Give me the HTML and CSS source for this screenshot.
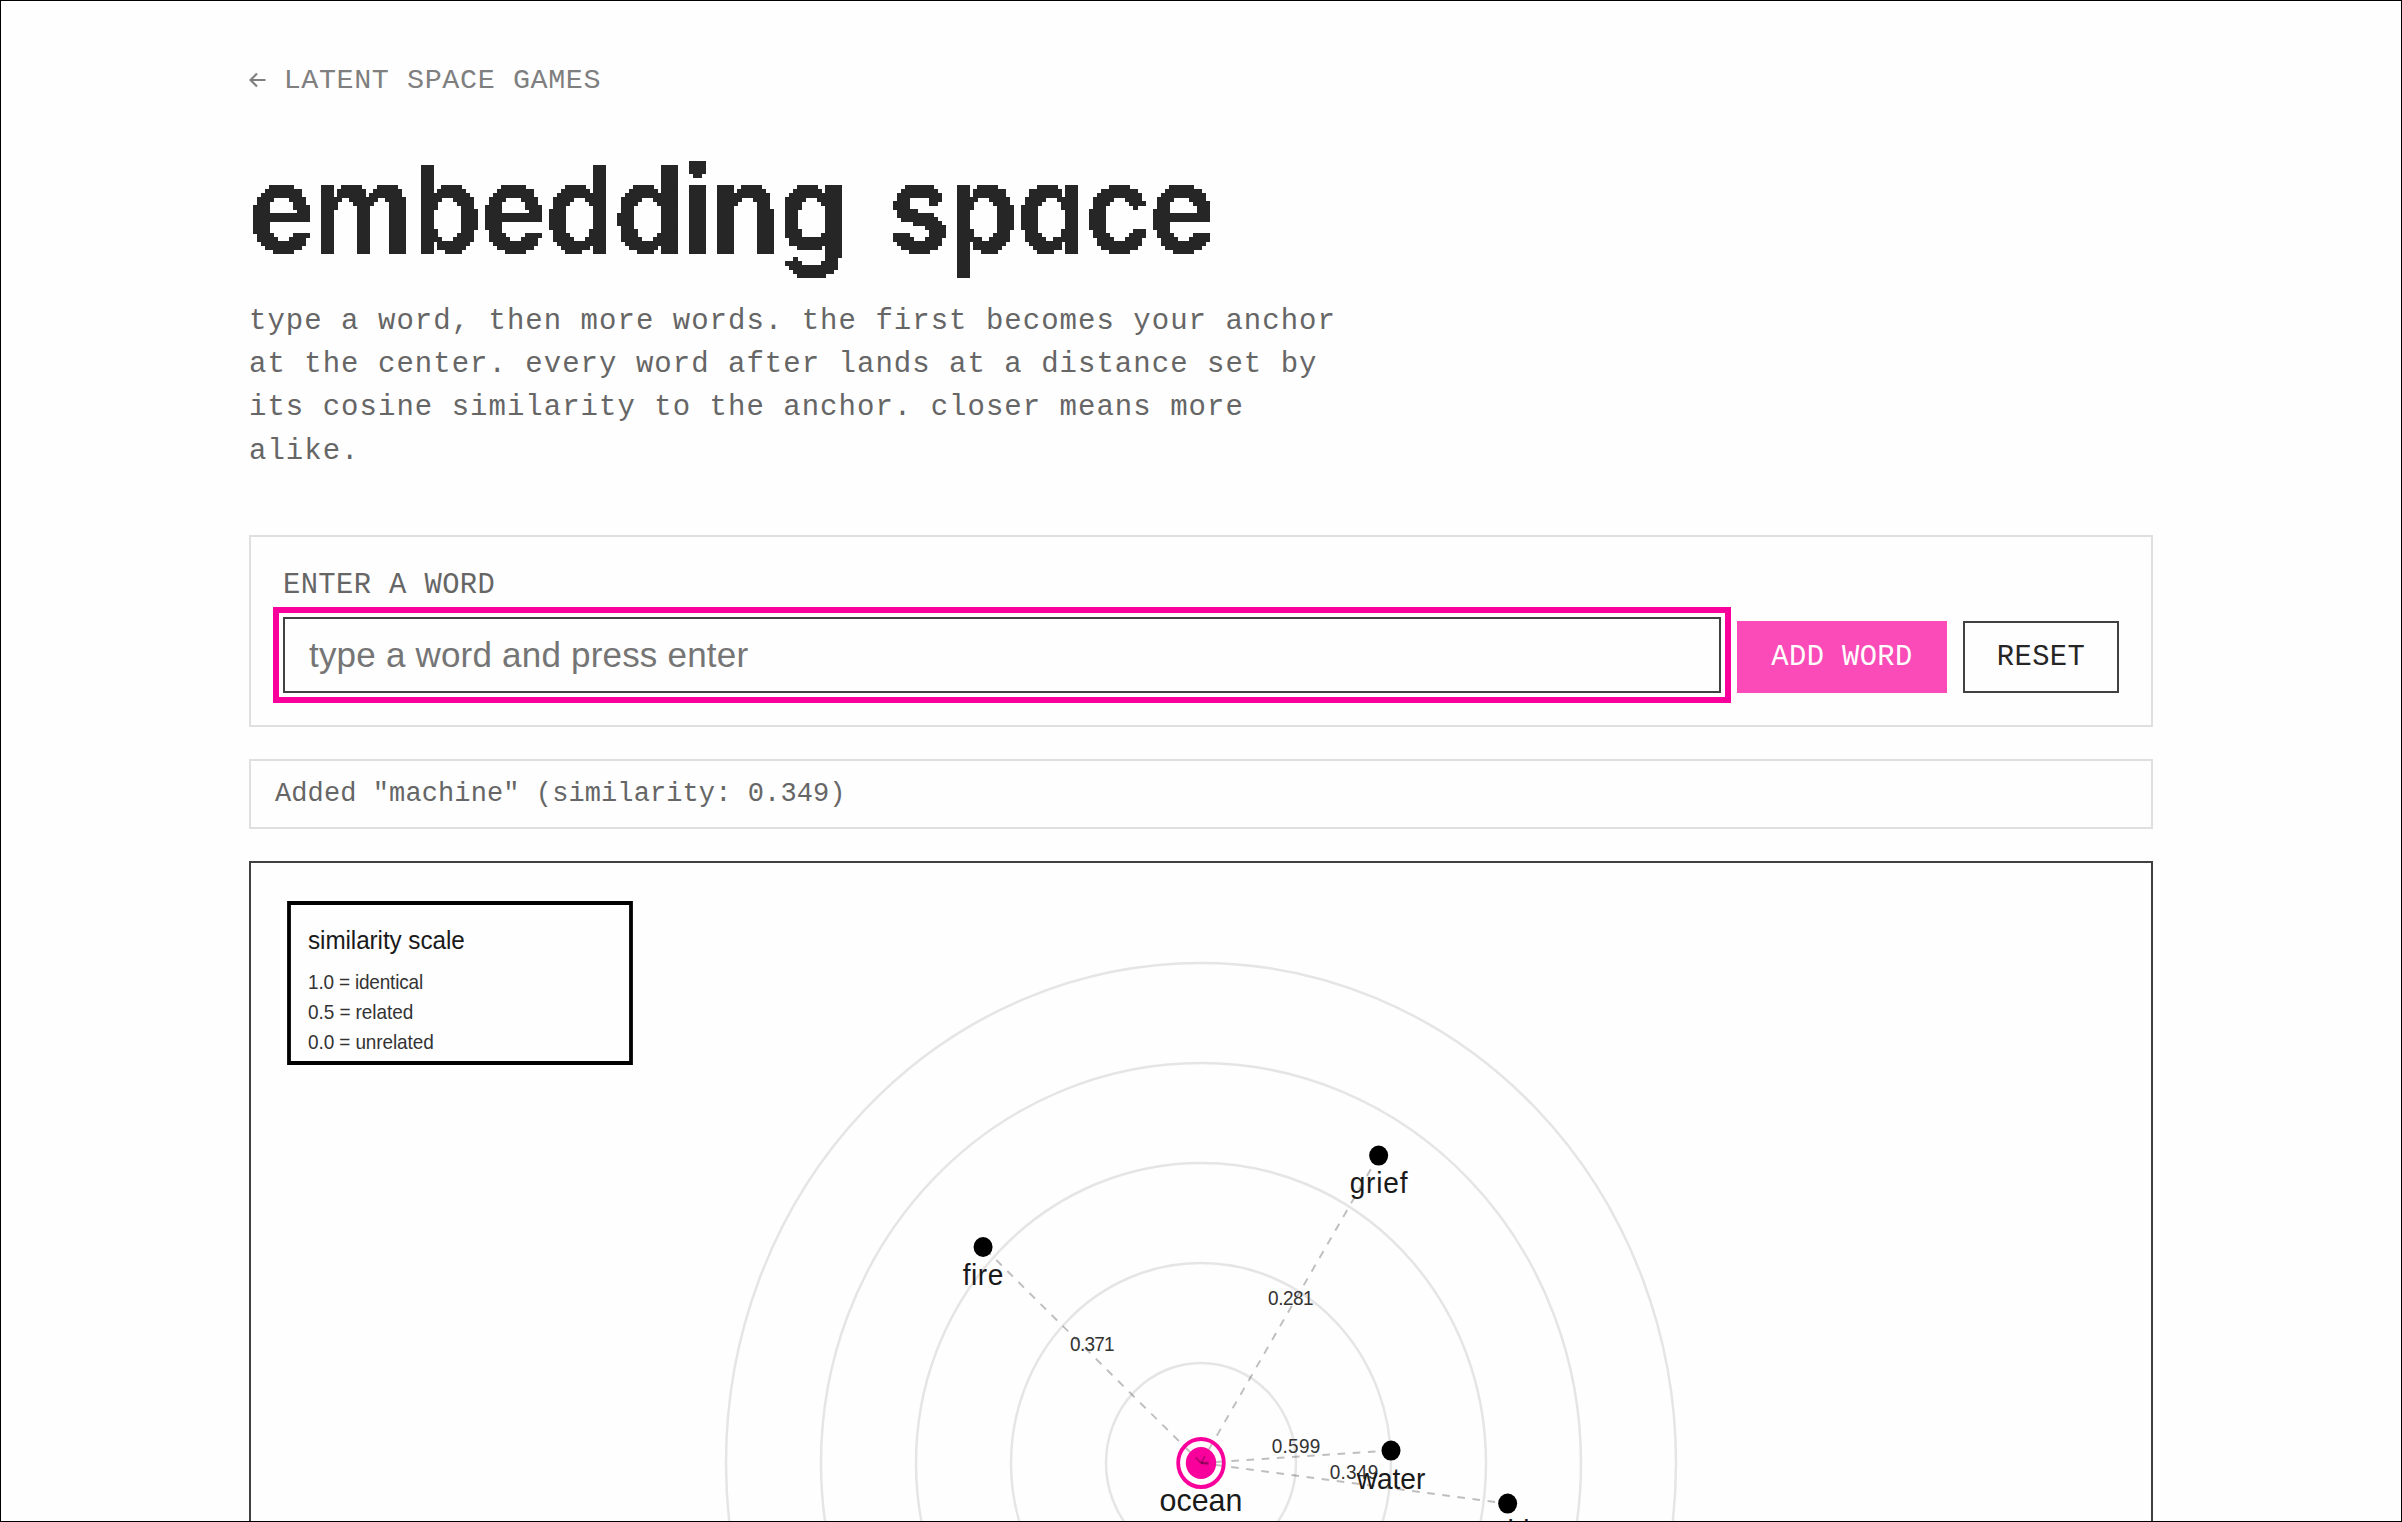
FILE: index.html
```html
<!DOCTYPE html>
<html lang="en">
<head>
    <meta charset="UTF-8">
    <meta name="viewport" content="width=device-width, initial-scale=1.0">
    <title>embedding space</title>
    <link rel="stylesheet" href="styles.css">
</head>
<body>
    <!-- snaps the heading to a 4px grid of blocks -->
    <svg class="defs" width="0" height="0" aria-hidden="true">
        <filter id="pixelate" filterUnits="userSpaceOnUse" primitiveUnits="userSpaceOnUse" x="0" y="0" width="1200" height="160" color-interpolation-filters="sRGB">
            <feFlood x="2" y="2" width="1" height="1" flood-color="#000" result="point"/>
            <feOffset in="point" x="0" y="0" width="4" height="4" result="cell"/>
            <feTile in="cell" x="0" y="0" width="1200" height="160" result="grid"/>
            <feComposite in="SourceGraphic" in2="grid" operator="in" result="samples"/>
            <feComponentTransfer in="samples" result="hard">
                <feFuncA type="discrete" tableValues="0 1"/>
            </feComponentTransfer>
            <feMorphology in="hard" operator="dilate" radius="2"/>
        </filter>
    </svg>

    <div class="page">
        <main class="container">
            <a class="back-link" href="#"><svg class="arrow" viewBox="0 0 17 16"><path d="M16.5 8H1.5M8 1.5L1.5 8L8 14.5"/></svg> LATENT SPACE GAMES</a>
            <h1 class="title"><span>embedding space</span></h1>
            <p class="intro">type a word, then more words. the first becomes your anchor at the center. every word after lands at a distance set by its cosine similarity to the anchor. closer means more alike.</p>

            <form class="word-form">
                <div class="field">
                    <label for="word">ENTER A WORD</label>
                    <input type="text" id="word" placeholder="type a word and press enter" autocomplete="off">
                </div>
                <button type="button" class="btn btn-primary">ADD WORD</button>
                <button type="button" class="btn">RESET</button>
            </form>

            <div class="status">Added "machine" (similarity: 0.349)</div>

            <div class="plot">
                <svg viewBox="0 0 1000 600" preserveAspectRatio="none">
                    <g class="rings">
                        <circle cx="500" cy="300" r="50"/>
                        <circle cx="500" cy="300" r="100"/>
                        <circle cx="500" cy="300" r="150"/>
                        <circle cx="500" cy="300" r="200"/>
                        <circle cx="500" cy="300" r="250"/>
                    </g>

                    <circle class="anchor" cx="500" cy="300" r="8"/>
                    <g class="links">
                        <line x1="500" y1="300" x2="600" y2="293.8"/>
                        <line x1="500" y1="300" x2="385.3" y2="192"/>
                        <line x1="500" y1="300" x2="593.5" y2="146.3"/>
                        <line x1="500" y1="300" x2="661.4" y2="320.3"/>
                    </g>
                    <circle class="anchor-ring" cx="500" cy="300" r="12"/>

                    <g class="scores">
                        <text x="550" y="294.8" textLength="25.6">0.599</text>
                        <text x="442.8" y="243.8" textLength="23.4">0.371</text>
                        <text x="547.3" y="221" textLength="24">0.281</text>
                        <text x="580.5" y="308" textLength="25.6">0.349</text>
                    </g>

                    <g class="words">
                        <circle cx="600" cy="293.8" r="5"/>
                        <circle cx="385.3" cy="192" r="5"/>
                        <circle cx="593.5" cy="146.3" r="5"/>
                        <circle cx="661.4" cy="320.3" r="5"/>
                        <text class="anchor-word" x="500" y="324">ocean</text>
                        <text x="600" y="313">water</text>
                        <text x="385.3" y="211" textLength="21.4">fire</text>
                        <text x="593.5" y="164.8" textLength="30.5">grief</text>
                        <text x="661.4" y="339">machine</text>
                    </g>

                    <g class="legend">
                        <rect x="20" y="20" width="180" height="80"/>
                        <text class="legend-title" x="30" y="43" textLength="82.5">similarity scale</text>
                        <text x="30" y="63" textLength="60.6">1.0 = identical</text>
                        <text x="30" y="78" textLength="55.4">0.5 = related</text>
                        <text x="30" y="93" textLength="66.2">0.0 = unrelated</text>
                    </g>
                </svg>
            </div>
        </main>
    </div>
</body>
</html>
```
FILE: styles.css
```css
* {
    box-sizing: border-box;
}
body {
    margin: 0;
    background-color: #fefefe;
    color: #262626;
    font-family: "Liberation Mono", monospace;
    overflow: hidden;
}
.defs {
    position: absolute;
}
.page {
    height: 100vh;
    border: 1px solid #000;
    overflow: hidden;
}
.container {
    width: 1904px;
    margin: 0 auto;
    padding-top: 60px;
}
.back-link {
    display: block;
    height: 40px;
    font-size: 28.4px;
    line-height: 40px;
    letter-spacing: 0.6px;
    color: #7f7f7f;
    text-decoration: none;
}
.arrow {
    width: 17px;
    height: 16px;
    fill: none;
    stroke: #7f7f7f;
    stroke-width: 2.2;
}
.title {
    margin: 32px 0 17px;
    font-family: Inter, sans-serif;
    font-size: 121px;
    font-weight: 600;
    line-height: 150px;
    font-feature-settings: "cv11";
    word-spacing: 15px;
    white-space: nowrap;
    filter: url(#pixelate);
}
.title span {
    display: inline-block;
    transform: scaleX(0.907);
    transform-origin: 0 0;
}
.intro {
    width: 1100px;
    margin: 0 0 62px;
    font-size: 29px;
    line-height: 43.2px;
    letter-spacing: 1.02px;
    color: #666;
}
.word-form {
    display: flex;
    align-items: flex-end;
    gap: 16px;
    padding: 33px 32px 32px;
    height: 192px;
    border: 2px solid #dfdfdf;
}
.field {
    flex: 1;
}
.field label {
    display: block;
    margin-bottom: 15px;
    font-size: 28.8px;
    line-height: 32px;
    letter-spacing: 0.4px;
    color: #666;
}
.field input {
    display: block;
    width: 100%;
    height: 76px;
    padding: 0 24px;
    border: 2px solid #414141;
    border-radius: 0;
    background-color: #fefefe;
    font-family: "Liberation Sans", sans-serif;
    font-size: 35px;
    letter-spacing: 0.2px;
    outline: 6px solid #f9009c;
    outline-offset: 4px;
}
.field input::placeholder {
    color: #757575;
}
.btn {
    width: 156px;
    height: 72px;
    padding: 2px 0 0;
    border: 2px solid #414141;
    background-color: #fefefe;
    color: #262626;
    font-family: "Liberation Mono", monospace;
    font-size: 28.8px;
    letter-spacing: 0.4px;
}
.btn-primary {
    width: 210px;
    border-color: #fa4bb8;
    background-color: #fa4bb8;
    color: #fefefe;
}
.status {
    margin: 32px 0;
    padding: 13px 24px;
    border: 2px solid #dfdfdf;
    font-size: 27px;
    line-height: 40px;
    letter-spacing: 0.1px;
    color: #666;
}
.plot {
    border: 2px solid #414141;
}
.plot svg {
    display: block;
    width: 1900px;
    height: 1200px;
    font-family: "Liberation Sans", sans-serif;
}
.rings circle {
    fill: none;
    stroke: #e5e5e5;
    stroke-width: 1.3;
}
.links line {
    stroke: #000;
    stroke-opacity: 0.25;
    stroke-dasharray: 4 4;
}
.anchor {
    fill: #f9009c;
}
.anchor-ring {
    fill: none;
    stroke: #f9009c;
    stroke-width: 2;
}
.scores text {
    font-size: 10px;
    fill: #333;
    text-anchor: middle;
}
.words circle {
    fill: #000;
}
.words text {
    font-size: 14.8px;
    fill: #1a1a1a;
    text-anchor: middle;
}
.words .anchor-word {
    font-size: 16px;
}
.legend rect {
    fill: #fefefe;
    stroke: #000;
    stroke-width: 2;
}
.legend text {
    font-size: 10px;
    fill: #333;
}
.legend .legend-title {
    font-size: 12.8px;
    fill: #1a1a1a;
}
```
